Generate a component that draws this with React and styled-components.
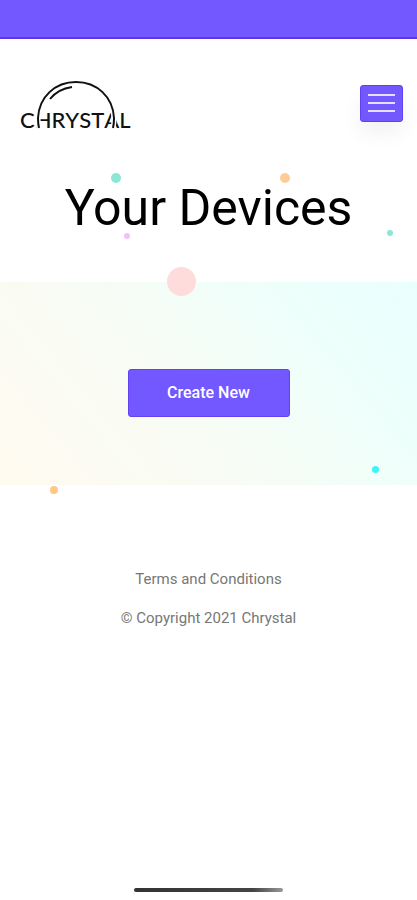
import React from 'react';
import styled, { createGlobalStyle } from 'styled-components';

const GlobalStyle = createGlobalStyle`
  *, *::before, *::after {
    box-sizing: border-box;
  }

  body {
    margin: 0;
    background: #fff;
    font-family: Roboto, 'Liberation Sans', sans-serif;
  }
`;

const Page = styled.div`
  display: flex;
  flex-direction: column;
  min-height: 100vh;
  overflow: hidden;
`;

const StatusBar = styled.div`
  height: 39px;
  background: #7357ff;
  border-bottom: 2px solid #5f35e8;
`;

const Header = styled.header`
  display: flex;
  justify-content: space-between;
  align-items: flex-start;
  padding: 42px 14px 0 20px;
`;

const LogoLink = styled.a`
  display: block;

  svg {
    display: block;
  }

  text {
    font-family: Lato, sans-serif;
    font-size: 22px;
    font-weight: 500;
    font-kerning: none;
    fill: #111;
  }
`;

const MenuButton = styled.button`
  display: flex;
  flex-direction: column;
  justify-content: center;
  gap: 6px;
  width: 43px;
  height: 37px;
  margin-top: 4px;
  padding: 0 7px 2px;
  border: 1px solid #6341f0;
  border-radius: 3px;
  background: #7357ff;
  box-shadow: 0 12px 20px rgba(0, 0, 0, 0.05);
  cursor: pointer;
`;

const MenuLine = styled.span`
  height: 2px;
  background: #e6dfff;
`;

const Hero = styled.section`
  position: relative;
  padding: 45px 16px 44px;
  text-align: center;
`;

const Title = styled.h1`
  margin: 0;
  font-size: 50px;
  line-height: 60px;
  font-weight: 400;
  color: #000;
`;

const Devices = styled.section`
  position: relative;
  display: flex;
  justify-content: center;
  padding: 87px 16px 68px;
  background: linear-gradient(50deg, #fffaf0 0%, #f7fcf5 45%, #eefffb 75%, #e9fffe 100%);
`;

const CreateButton = styled.button`
  width: 162px;
  height: 48px;
  padding: 0 0 2px;
  border: 1px solid #6341f0;
  border-radius: 3px;
  background: #7357ff;
  color: #fff;
  font-family: inherit;
  font-size: 16px;
  font-weight: 500;
  cursor: pointer;
`;

const Dot = styled.span`
  position: absolute;
  left: ${props => props.$left};
  top: ${props => props.$top};
  z-index: 1;
  width: ${props => props.$size}px;
  height: ${props => props.$size}px;
  border-radius: 50%;
  background: ${props => props.$color};
`;

const Footer = styled.footer`
  display: flex;
  flex-direction: column;
  align-items: center;
  gap: 19px;
  padding-top: 84px;
  font-size: 15px;
  line-height: 20px;
  color: #777;
`;

const FooterLink = styled.a`
  color: inherit;
  text-decoration: none;
`;

const Copyright = styled.p`
  margin: 0;
`;

const HomeIndicator = styled.div`
  width: 149px;
  height: 4px;
  margin: auto auto 8px;
  border-radius: 2px;
  background: linear-gradient(90deg, #333 0%, #444 80%, #999 100%);
`;

const heroDots = [
  { left: '26.6%', top: '40px', size: 10, color: '#8ae6d6' },
  { left: '67.2%', top: '40px', size: 10, color: '#ffcc99' },
  { left: '29.8%', top: '100px', size: 6, color: '#f5bfff' },
  { left: '92.8%', top: '97px', size: 6, color: '#8ae6d6' },
];

const deviceDots = [
  { left: '40%', top: '-15px', size: 29, color: '#ffdcdc' },
  { left: '89.3%', top: '184px', size: 7, color: '#3cf5f5' },
  { left: '12%', top: '204px', size: 8, color: '#ffc88a' },
];

const Dots = ({ items }) => items.map(({ left, top, size, color }) => (
  <Dot key={left} $left={left} $top={top} $size={size} $color={color} />
));

const dome = 'M19 47Q18 43 18 37C19 16 35 1 56 1S93 16 94 37Q94 43 93 47';

const Logo = () => (
  <svg width="116" height="52" viewBox="0 0 116 52" role="img" aria-label="Chrystal">
    <text x="0" y="47">CHRYSTAL</text>
    <g fill="none">
      <path d={dome} stroke="#fff" strokeWidth="5" />
      <path d={dome} stroke="#111" strokeWidth="2" />
      <path d="M30 18Q38 8 52 6" stroke="#111" strokeWidth="2" />
    </g>
  </svg>
);

const App = () => {
  return <Page>
    <GlobalStyle />
    <StatusBar />
    <Header>
      <LogoLink href="#"><Logo /></LogoLink>
      <MenuButton type="button" aria-label="Menu">
        <MenuLine />
        <MenuLine />
        <MenuLine />
      </MenuButton>
    </Header>
    <main>
      <Hero>
        <Title>Your Devices</Title>
        <Dots items={heroDots} />
      </Hero>
      <Devices>
        <CreateButton type="button">Create New</CreateButton>
        <Dots items={deviceDots} />
      </Devices>
    </main>
    <Footer>
      <FooterLink href="#">Terms and Conditions</FooterLink>
      <Copyright>© Copyright 2021 Chrystal</Copyright>
    </Footer>
    <HomeIndicator />
  </Page>
}

export default App;
